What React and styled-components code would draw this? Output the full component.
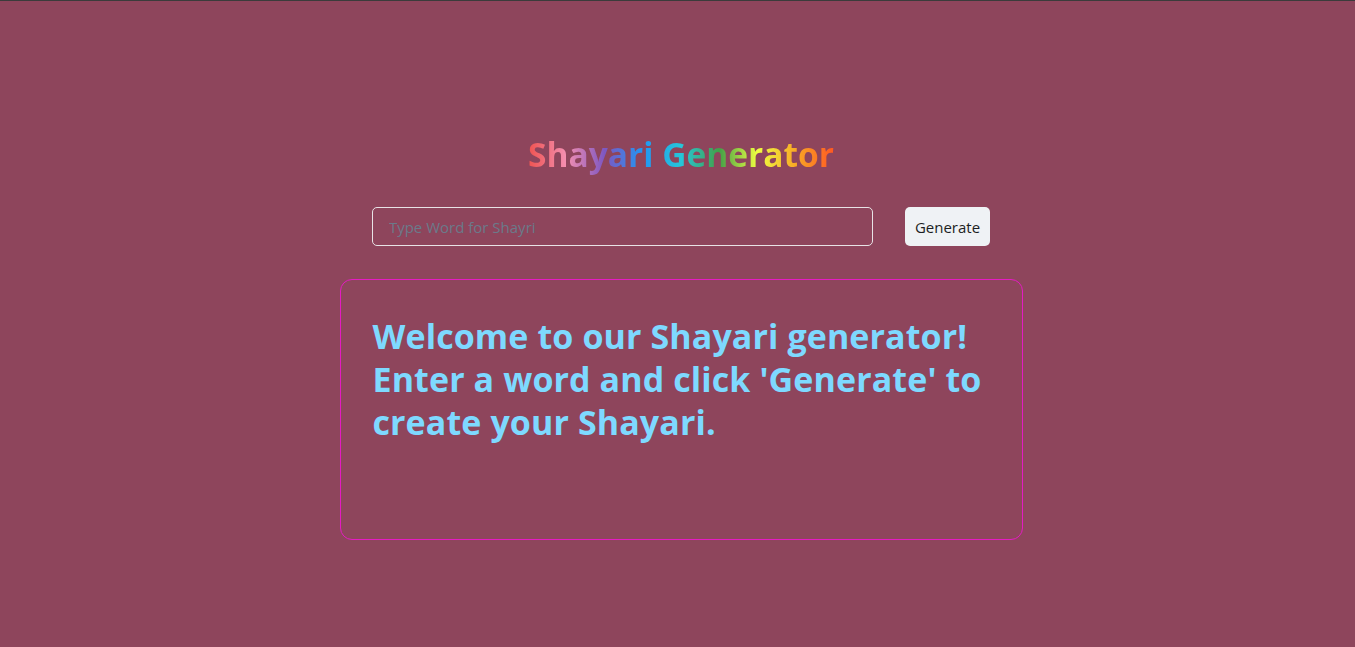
import React, { useState } from 'react';
import styled, { createGlobalStyle } from 'styled-components';

const GlobalStyle = createGlobalStyle`
  html, body {
    margin: 0;
    padding: 0;
    background-color: #8e455c;
  }
  body {
    font-family: "Open Sans", "Noto Sans", "Liberation Sans", sans-serif;
    border-top: 1px solid #3b3b3b;
  }
`;

const Page = styled.main`
  min-height: 646px;
  display: flex;
  flex-direction: column;
  align-items: center;
  padding-top: 132px;
  padding-left: 7px;
  box-sizing: border-box;
`;

// rainbow heading
const Title = styled.h1`
  margin: 0;
  font-size: 33.5px;
  font-weight: 700;
  line-height: 42px;
  background: linear-gradient(to right, #ef5350, #f48fb1, #7e57c2, #2196f3, #26c6da, #43a047, #eeff41, #f9a825, #ff5722);
  -webkit-background-clip: text;
  background-clip: text;
  color: transparent;
`;

const SearchRow = styled.div`
  display: flex;
  align-items: center;
  gap: 32px;
  margin-top: 32px;
`;

const WordInput = styled.input`
  width: 501px;
  height: 39px;
  box-sizing: border-box;
  padding: 0 16px;
  background: transparent;
  border: 1px solid #e8e3e6;
  border-radius: 5px;
  font-family: inherit;
  font-size: 15px;
  color: #fff;
  outline: none;

  &::placeholder {
    color: #6b7a8a;
  }
`;

const GenerateButton = styled.button`
  height: 39px;
  padding: 0 10px;
  background-color: #eff2f5;
  color: #1c1f23;
  border: none;
  border-radius: 5px;
  font-family: inherit;
  font-size: 15px;
  cursor: pointer;
`;

const ShayariCard = styled.section`
  width: 683px;
  height: 261px;
  box-sizing: border-box;
  margin-top: 33px;
  padding: 35px 32px;
  border: 1px solid #e41cc2;
  border-radius: 12px;
`;

const ShayariText = styled.p`
  margin: 0;
  font-size: 34px;
  font-weight: 700;
  line-height: 43px;
  letter-spacing: 0.1px;
  color: #7ed9ff;
`;

export default function App() {
  const [word, setWord] = useState('');

  return (
    <>
      <GlobalStyle />
      <Page>
        <Title>Shayari Generator</Title>
        <SearchRow>
          <WordInput
            value={word}
            onChange={e => setWord(e.target.value)}
            placeholder="Type Word for Shayri"
          />
          <GenerateButton>Generate</GenerateButton>
        </SearchRow>
        <ShayariCard>
          <ShayariText>
            Welcome to our Shayari generator! Enter a word and click 'Generate' to create your Shayari.
          </ShayariText>
        </ShayariCard>
      </Page>
    </>
  );
}
